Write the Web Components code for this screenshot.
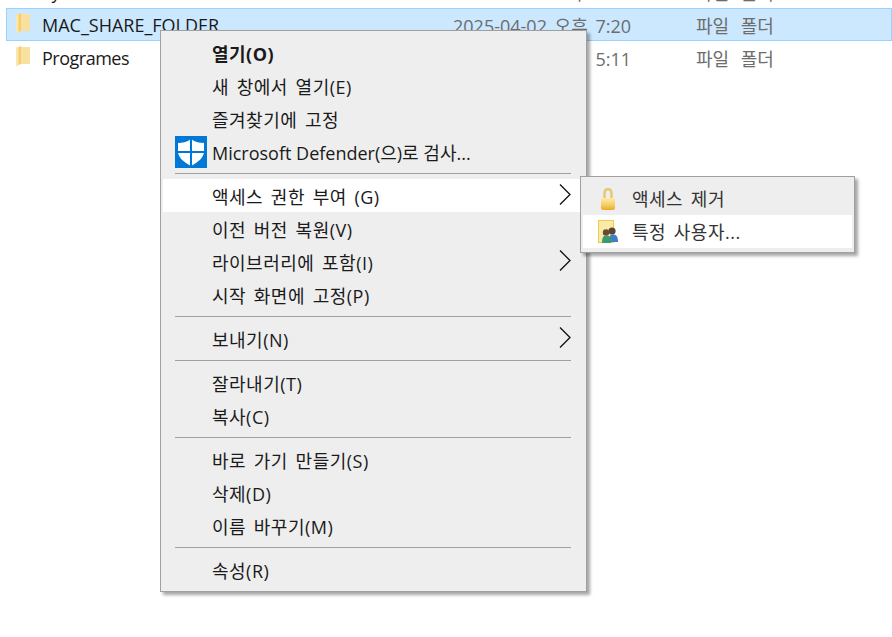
<!DOCTYPE html>
<html>
<head>
<meta charset="utf-8">
<style>
  html, body { margin: 0; height: 100%; overflow: hidden; background: #fff; }
  body { font-family: "Open Sans", "Noto Sans CJK KR", sans-serif; }
  .stage { position: relative; height: 637px; overflow: hidden; }
</style>
</head>
<body>
<div class="stage">
  <file-list>
    <file-row name="Lynn" date="2025-04-02 오후 6:36" kind="파일 폴더"></file-row>
    <file-row selected name="MAC_SHARE_FOLDER" date="2025-04-02 오후 7:20" kind="파일 폴더"></file-row>
    <file-row style="--name-track:-.5px" name="Programes" date="2025-04-02 오후 5:11" kind="파일 폴더"></file-row>
  </file-list>

  <context-menu style="left:160px;top:30px;width:427px">
    <menu-item bold>열기(O)</menu-item>
    <menu-item>새 창에서 열기(E)</menu-item>
    <menu-item>즐겨찾기에 고정</menu-item>
    <menu-item icon="shield" style="letter-spacing:0;word-spacing:0">Microsoft Defender(으)로 검사...</menu-item>
    <menu-sep></menu-sep>
    <menu-item hot arrow>액세스 권한 부여 (G)</menu-item>
    <menu-item>이전 버전 복원(V)</menu-item>
    <menu-item arrow>라이브러리에 포함(I)</menu-item>
    <menu-item>시작 화면에 고정(P)</menu-item>
    <menu-sep></menu-sep>
    <menu-item arrow>보내기(N)</menu-item>
    <menu-sep></menu-sep>
    <menu-item>잘라내기(T)</menu-item>
    <menu-item>복사(C)</menu-item>
    <menu-sep></menu-sep>
    <menu-item>바로 가기 만들기(S)</menu-item>
    <menu-item>삭제(D)</menu-item>
    <menu-item>이름 바꾸기(M)</menu-item>
    <menu-sep></menu-sep>
    <menu-item>속성(R)</menu-item>
  </context-menu>

  <context-menu sub style="left:580px;top:176px;width:275px">
    <menu-item sub icon="lock">액세스 제거</menu-item>
    <menu-item sub hot icon="users">특정 사용자...</menu-item>
  </context-menu>
</div>

<script>
  const FOLDER = `<svg width="16" height="21" viewBox="0 0 16 21">
    <path d="M5 1 H15 V18 H5 Z" fill="#f8e0a0"/>
    <path d="M1 2 L6 0 V18 L1 20 Z" fill="#f5cf6e"/>
    <path d="M1 2 L3.500 1 V19 L1 20 Z" fill="#fbe6ae"/>
  </svg>`;

  const ICONS = {
    shield: `<svg width="32" height="32" viewBox="0 0 32 32">
      <rect width="32" height="32" fill="#0078d7"/>
      <path d="M16 3 C20 6 25 7 29 7 V15 C29 22 23 26 16 30 C9 26 3 22 3 15 V7 C7 7 12 6 16 3 Z" fill="#fff"/>
      <rect x="15" y="2" width="2" height="29" fill="#0078d7"/>
      <rect x="2" y="15" width="28" height="2" fill="#0078d7"/>
    </svg>`,
    lock: `<svg class="lock" width="16" height="22" viewBox="0 0 16 22">
      <defs><linearGradient id="lk" x1="0" y1="0" x2="0" y2="1"><stop offset="0" stop-color="#fdeab0"/><stop offset=".55" stop-color="#f8cf63"/><stop offset="1" stop-color="#eba92f"/></linearGradient></defs>
      <path d="M4.500 11 V5.500 C4.500 2.500 5.500 1.200 8 1.200 C10.500 1.200 11.500 2.500 11.500 5.500 V11" fill="none" stroke="#e9c670" stroke-width="2.400"/>
      <rect x="1" y="10" width="14" height="12" rx="2.500" fill="url(#lk)"/>
    </svg>`,
    users: `<svg width="20" height="23" viewBox="0 0 20 23">
      <rect x="0.500" y="0.500" width="15" height="22" fill="#fbe9a8" stroke="#eccb55"/>
      <circle cx="14" cy="11" r="3.600" fill="#5a4638"/>
      <path d="M11 22 C11 16 12 14.500 15 14.500 C18 14.500 20 16 20 22 Z" fill="#3f7fc4"/>
      <circle cx="8" cy="12.500" r="3.200" fill="#6b4a34"/>
      <path d="M4 23 C4 17 5.500 15.500 8.500 15.500 C11.500 15.500 13 17 13 23 Z" fill="#3c9a6e"/>
    </svg>`
  };

  class FileList extends HTMLElement {
    constructor() {
      super();
      this.attachShadow({ mode: 'open' });
      this.shadowRoot.innerHTML = `
        <style>
          :host { display: flex; flex-direction: column; margin-top: -25px; padding-left: 6px; }
        </style>
        <slot></slot>`;
    }
  }

  class FileRow extends HTMLElement {
    constructor() {
      super();
      this.attachShadow({ mode: 'open' });
    }
    connectedCallback() {
      this.shadowRoot.innerHTML = `
        <style>
          :host { display: flex; align-items: center; height: 33px; box-sizing: border-box; border: 1px solid transparent; font-size: 18px; white-space: nowrap; }
          :host([selected]) { background: #cce8ff; border-color: #99d1ff; }
          .ic { width: 16px; height: 21px; margin-left: 8px; margin-top: -2px; flex: none; }
          .name { width: 411px; margin-left: 11px; color: #1a1a1a; letter-spacing: var(--name-track, 0); flex: none; }
          .date { width: 243px; color: #6d6d6d; word-spacing: 3px; flex: none; }
          .kind { color: #6d6d6d; word-spacing: 7px; }
        </style>
        <span class="ic">${FOLDER}</span>
        <span class="name">${this.getAttribute('name')}</span>
        <span class="date">${this.getAttribute('date')}</span>
        <span class="kind">${this.getAttribute('kind')}</span>`;
    }
  }

  class ContextMenu extends HTMLElement {
    constructor() {
      super();
      this.attachShadow({ mode: 'open' });
      this.shadowRoot.innerHTML = `
        <style>
          :host { position: absolute; display: flex; flex-direction: column; box-sizing: border-box; background: #eeeeee; border: 1px solid #a0a0a0; padding: 5px 2px 5px; box-shadow: 3px 3px 3px rgba(0,0,0,.35); }
          :host([sub]) { padding: 5px 2px 4px; }
        </style>
        <slot></slot>`;
    }
  }

  class MenuItem extends HTMLElement {
    constructor() {
      super();
      this.attachShadow({ mode: 'open' });
    }
    connectedCallback() {
      const icon = ICONS[this.getAttribute('icon')] || '';
      const arrow = this.hasAttribute('arrow')
        ? `<svg class="arrow" width="12" height="21" viewBox="0 0 12 21"><path d="M1 0.500 L11 10.500 L1 20.500" fill="none" stroke="#111" stroke-width="1.300"/></svg>`
        : '';
      this.shadowRoot.innerHTML = `
        <style>
          :host { display: flex; align-items: center; height: 33px; font-size: 18px; letter-spacing: .5px; word-spacing: 2.500px; color: #1a1a1a; white-space: nowrap; }
          :host([sub]) { color: #333; }
          :host([hot]) { background: #fff; }
          :host([bold]) { font-weight: 700; }
          .ic { width: 49px; flex: none; display: flex; align-items: center; justify-content: flex-start; padding-left: 12px; box-sizing: border-box; }
          :host([sub]) .ic { padding-left: 15px; }
          :host([sub]) .t { margin-top: -2px; }
          .lock { margin-left: 2px; }
          .arrow { margin-left: auto; margin-right: 13px; margin-top: -2px; }
        </style>
        <span class="ic">${icon}</span>
        <span class="t"><slot></slot></span>
        ${arrow}`;
    }
  }

  class MenuSep extends HTMLElement {
    constructor() {
      super();
      this.attachShadow({ mode: 'open' });
      this.shadowRoot.innerHTML = `
        <style>
          :host { display: flex; align-items: center; height: 11px; padding: 0 13px 0 12px; }
          div { flex: 1; height: 1px; background: #a0a0a0; }
        </style>
        <div></div>`;
    }
  }

  customElements.define('file-list', FileList);
  customElements.define('file-row', FileRow);
  customElements.define('context-menu', ContextMenu);
  customElements.define('menu-item', MenuItem);
  customElements.define('menu-sep', MenuSep);
</script>
</body>
</html>
